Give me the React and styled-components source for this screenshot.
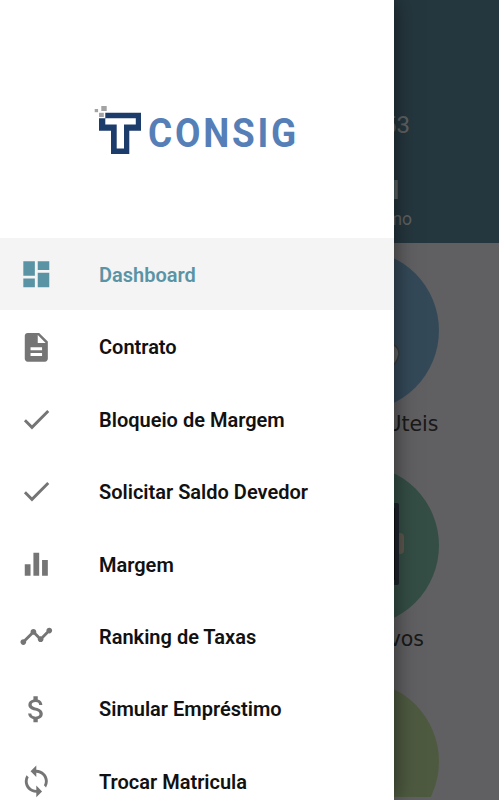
import styled, { createGlobalStyle } from 'styled-components';
import {
	MdDashboard,
	MdDescription,
	MdCheck,
	MdEqualizer,
	MdTimeline,
	MdAttachMoney,
	MdSync,
} from 'react-icons/md';

const links = [
	{ label: 'Dashboard', icon: MdDashboard, active: true },
	{ label: 'Contrato', icon: MdDescription },
	{ label: 'Bloqueio de Margem', icon: MdCheck },
	{ label: 'Solicitar Saldo Devedor', icon: MdCheck },
	{ label: 'Margem', icon: MdEqualizer },
	{ label: 'Ranking de Taxas', icon: MdTimeline },
	{ label: 'Simular Empréstimo', icon: MdAttachMoney },
	{ label: 'Trocar Matricula', icon: MdSync },
];

const Logo = () => (
	<LogoBox>
		<LogoMark viewBox='0 0 48 50'>
			<path
				fill='#1c3c6c'
				d='M11.3 7.7H47v18H35.3V49H17V25.7H5V13.3h6.3z'
			/>
			<path fill='#fff' d='M11.3 13.3h30.5v6.2H30v24h-7.3v-24H11.3z' />
			<g fill='#a3a3a3'>
				<path d='M.7 4h3.4v3.2H.7z' />
				<path d='M7.3 1h5.4v5H7.3z' />
				<path d='M5 7.8h4.8v4.2H5z' />
			</g>
		</LogoMark>
		<LogoText>CONSIG</LogoText>
	</LogoBox>
);

const HandIcon = () => (
	<TileArt viewBox='0 0 161 161'>
		<path
			fill='#a3a5a6'
			stroke='#5c6468'
			strokeWidth='1.5'
			d='M104 95h12q5 3 5 9q-2 9-7 12h-10z'
		/>
	</TileArt>
);

const PhoneIcon = () => (
	<TileArt viewBox='0 0 161 161'>
		<rect x='110' y='68' width='16' height='21' rx='4' fill='#97917f' />
		<rect x='60' y='38' width='61' height='82' rx='2' fill='#353f4b' />
		<rect x='60' y='43' width='57' height='72' fill='#171b20' />
	</TileArt>
);

const App = () => {
	return (
		<Screen>
			<GlobalStyle />
			<Header>
				<Matricula>053</Matricula>
				<Total>Total</Total>
				<Caption>Empréstimo</Caption>
			</Header>
			<Tiles>
				<Tile>
					<Circle $color='#587b93'>
						<HandIcon />
					</Circle>
					<TileLabel>Links Uteis</TileLabel>
				</Tile>
				<Tile>
					<Circle $color='#588273'>
						<PhoneIcon />
					</Circle>
					<TileLabel $inset='14.5px'>Aplicativos</TileLabel>
				</Tile>
				<Tile $last>
					<Circle $color='#83976b' />
				</Tile>
			</Tiles>
			<Overlay>
				<Drawer>
					<Logo />
					<nav>
						{links.map(({ label, icon: Icon, active }) => (
							<NavItem key={label} $active={active}>
								<Icon className='navIcon' />
								<span className='navLabel'>{label}</span>
							</NavItem>
						))}
					</nav>
				</Drawer>
			</Overlay>
		</Screen>
	);
};

const GlobalStyle = createGlobalStyle`
	* {
		box-sizing: border-box;
	}

	body {
		margin: 0;
		overflow: hidden;
		font-family: Roboto, sans-serif;
	}
`;

const Screen = styled.main`
	position: relative;
	height: 800px;
	overflow: hidden;
	background: #a1a0a3;
`;

const Header = styled.header`
	height: 242.5px;
	padding: 111px 0 0;
	display: flex;
	flex-direction: column;
	align-items: flex-start;
	background: #3e5d68;
	color: #a0a2a3;
`;

const Matricula = styled.div`
	width: 410px;
	text-align: right;
	font-size: 24px;
	line-height: 28px;
`;

const Total = styled.div`
	width: 399px;
	margin-top: 37px;
	text-align: right;
	font-size: 25px;
	font-weight: 700;
	line-height: 30px;
`;

const Caption = styled.div`
	width: 412px;
	margin-top: 2px;
	text-align: right;
	font-size: 17.5px;
	line-height: 22px;
`;

const Tiles = styled.section`
	width: 438.5px;
	padding-top: 7.5px;
	display: flex;
	flex-direction: column;
	align-items: flex-end;
`;

const Tile = styled.div`
	width: 161px;
	height: ${({ $last }) => ($last ? '116px' : '215.3px')};
	flex-shrink: 0;
	overflow: ${({ $last }) => ($last ? 'hidden' : 'visible')};
`;

const Circle = styled.div`
	width: 161px;
	height: 161px;
	border-radius: 50%;
	background: ${({ $color }) => $color};
`;

const TileArt = styled.svg`
	display: block;
	width: 161px;
	height: 161px;
`;

const TileLabel = styled.div`
	padding-right: ${({ $inset }) => $inset || '0'};
	text-align: right;
	white-space: nowrap;
	font-family: 'DejaVu Sans', sans-serif;
	font-size: 20.5px;
	line-height: 26px;
	color: #2a2a2c;
`;

const Overlay = styled.div`
	position: absolute;
	inset: 0;
	background: rgba(0, 0, 0, 0.4);
`;

const Drawer = styled.aside`
	width: 393.5px;
	height: 800px;
	overflow: hidden;
	background: #fff;
	box-shadow: 0 0 22px rgba(0, 0, 0, 0.55);
`;

const LogoBox = styled.div`
	height: 237.8px;
	padding: 105px 0 0 94px;
	display: flex;
	align-items: flex-start;
`;

const LogoMark = styled.svg`
	width: 48px;
	height: 50px;
`;

const LogoText = styled.span`
	margin: 4px 0 0 6px;
	font-family: Roboto, sans-serif;
	font-size: 41px;
	font-weight: 700;
	letter-spacing: 3.1px;
	line-height: 48px;
	color: #567fb8;
	transform: scaleX(0.9);
	transform-origin: left;
`;

const NavItem = styled.a`
	height: 72.4px;
	padding: 1px 0 0 19px;
	display: flex;
	align-items: center;
	background: ${({ $active }) => ($active ? '#f4f4f4' : 'transparent')};
	color: ${({ $active }) => ($active ? '#5a93a4' : '#111')};

	.navIcon {
		width: 34.6px;
		height: 34.6px;
		flex-shrink: 0;
		color: ${({ $active }) => ($active ? '#5a93a4' : '#757575')};
	}

	.navLabel {
		margin-left: 45.4px;
		padding-top: 1px;
		font-size: 20px;
		font-weight: 600;
		line-height: 24px;
		white-space: nowrap;
	}
`;

export default App;
